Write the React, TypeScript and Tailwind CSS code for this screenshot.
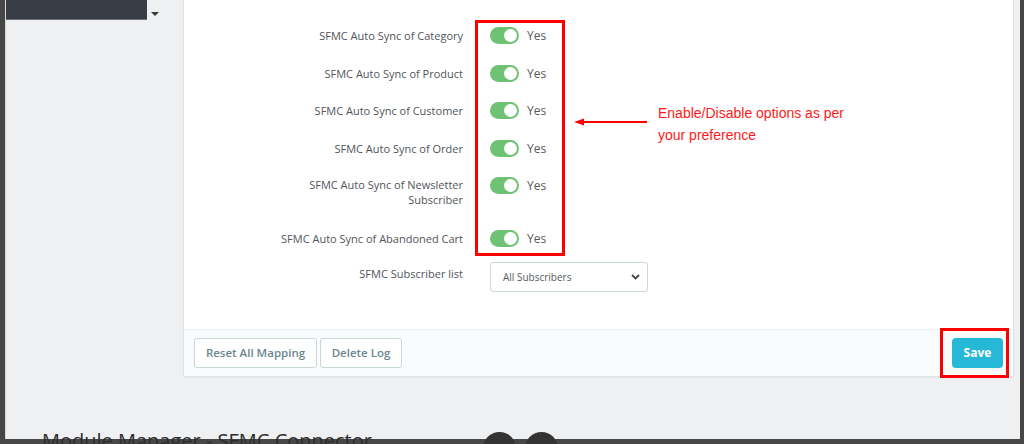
import React from "react";

const rows: { label: React.ReactNode; h: number; mt: number; top?: boolean }[] = [
  { label: "SFMC Auto Sync of Category", h: 22, mt: 24 },
  { label: "SFMC Auto Sync of Product", h: 22, mt: 16 },
  { label: "SFMC Auto Sync of Customer", h: 22, mt: 15 },
  { label: "SFMC Auto Sync of Order", h: 22, mt: 16 },
  {
    label: (
      <>
        SFMC Auto Sync of Newsletter
        <br />
        Subscriber
      </>
    ),
    h: 32,
    mt: 18,
    top: true,
  },
  { label: "SFMC Auto Sync of Abandoned Cart", h: 22, mt: 18 },
];

function Toggle() {
  return (
    <div className="flex items-center gap-[8px]">
      <div className="w-[29px] h-[17px] rounded-full bg-[#6fc173] flex items-center justify-end pr-[2px]">
        <div className="w-[13px] h-[13px] rounded-full bg-white" />
      </div>
      <span className="text-[12px] text-[#555a60] mt-[1px]">Yes</span>
    </div>
  );
}

export default function App() {
  return (
    <div
      className="relative w-[1024px] h-[444px] overflow-hidden bg-[#474747]"
      style={{ fontFamily: '"Open Sans", "Noto Sans", sans-serif' }}
    >
      <div className="ml-[5px] mr-[4px] h-[439px] bg-[#eff0f2] border-l border-[#d6d8db] flex">
        {/* left column */}
        <div className="w-[177px] shrink-0 flex items-start">
          <div className="w-[141px] h-[20px] bg-[#383c44] border-b border-[#6b6f75]" />
          <div className="ml-[4px] mt-[12px] w-0 h-0 border-l-[4px] border-r-[4px] border-t-[4px] border-l-transparent border-r-transparent border-t-[#3a3a3a]" />
        </div>
        {/* card */}
        <div className="w-[831px] h-[377px] bg-white border border-t-0 border-[#dfe3e6] rounded-b-[3px] shadow-[0_1px_2px_rgba(0,0,0,0.04)] flex flex-col">
          <div className="relative h-[329px] flex flex-col">
            {rows.map((r, i) => (
              <div
                key={i}
                className={r.top ? "flex items-start" : "flex items-center"}
                style={{ height: r.h, marginTop: r.mt }}
              >
                <div className="w-[279px] text-right text-[11px] leading-[15px] text-[#50555b]">
                  {r.label}
                </div>
                <div className={r.top ? "ml-[27px] -mt-[1px]" : "ml-[27px]"}>
                  <Toggle />
                </div>
              </div>
            ))}
            <div className="flex items-center h-[30px] mt-[13px]">
              <div className="w-[279px] text-right text-[11px] text-[#50555b] -mt-[5px]">
                SFMC Subscriber list
              </div>
              <div className="ml-[27px] w-[158px] h-[30px] border border-[#c9d6da] rounded-[3px] flex items-center justify-between pl-[12px] pr-[7px]">
                <span className="text-[10px] text-[#555a60]">All Subscribers</span>
                <svg width="9" height="6" viewBox="0 0 9 6">
                  <path d="M1 1l3.5 3.5L8 1" stroke="#444" strokeWidth="1.8" fill="none" />
                </svg>
              </div>
            </div>

            {/* red annotation box */}
            <div className="absolute left-[291px] top-[20px] w-[90px] h-[236px] border-[3px] border-[#ff0000]" />
            {/* arrow */}
            <div className="absolute left-[390px] top-[117px] flex items-center">
              <svg width="74" height="10" viewBox="0 0 74 10">
                <path d="M0 5 L10 1.5 L10 8.5 Z" fill="#ff0000" />
                <line x1="8" y1="5" x2="73" y2="5" stroke="#ff0000" strokeWidth="2" />
              </svg>
            </div>
            <div
              className="absolute left-[474px] top-[102px] text-[14px] leading-[22px] text-[#ff1a1a]"
              style={{ fontFamily: '"Liberation Sans", Arial, sans-serif' }}
            >
              Enable/Disable options as per
              <br />
              your preference
            </div>
          </div>
          {/* footer */}
          <div className="relative flex-1 bg-[#fafbfc] border-t border-[#eef0f2] flex items-start justify-between pt-[8px] px-[10px] rounded-b-[3px]">
            <div className="flex gap-[3px]">
              <button className="h-[30px] w-[123px] border border-[#c9d6da] rounded-[3px] bg-white text-[11.5px] font-semibold text-[#6c868e]">
                Reset All Mapping
              </button>
              <button className="h-[30px] w-[82px] border border-[#c9d6da] rounded-[3px] bg-white text-[11.5px] font-semibold text-[#6c868e]">
                Delete Log
              </button>
            </div>
            <button className="h-[30px] w-[51px] rounded-[4px] bg-[#25b9d7] text-[12px] font-bold text-white">
              Save
            </button>
            <div className="absolute left-[756px] top-[-2px] w-[69px] h-[50px] border-[3px] border-[#ff0000]" />
          </div>
        </div>
      </div>
      {/* underlying page bits at the bottom */}
      <div className="absolute left-[42px] top-[431px] text-[20px] leading-none text-[#2d2d2d] whitespace-nowrap">
        Module Manager - SFMC Connector
      </div>
      <div className="absolute left-[483px] top-[432px] w-[33px] h-[33px] rounded-full bg-[#333333]" />
      <div className="absolute left-[525px] top-[432px] w-[33px] h-[33px] rounded-full bg-[#333333]" />
    </div>
  );
}
